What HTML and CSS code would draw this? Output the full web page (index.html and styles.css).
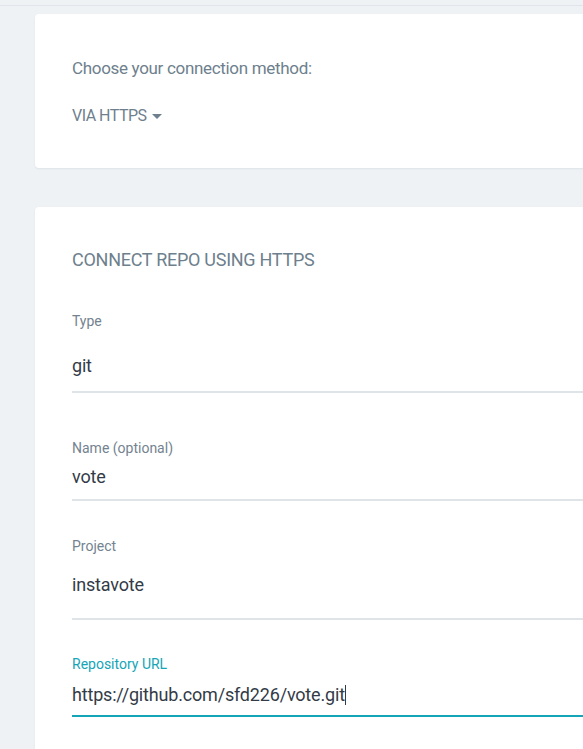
FILE: index.html
```html
<!DOCTYPE html>
<html lang="en">
<head>
<meta charset="utf-8">
<title>Connect repo</title>
<link rel="stylesheet" href="styles.css">
</head>
<body>
<div class="topbar"></div>
<main class="content">
  <section class="card card-method">
    <p class="method-title">Choose your connection method:</p>
    <div class="method-select">VIA HTTPS <span class="caret"></span></div>
  </section>
  <section class="card card-form">
    <h2 class="form-title">CONNECT REPO USING HTTPS</h2>
    <div class="field field-type">
      <div class="field-label">Type</div>
      <div class="field-value">git</div>
    </div>
    <div class="field field-name">
      <div class="field-label">Name (optional)</div>
      <div class="field-value">vote</div>
    </div>
    <div class="field field-project">
      <div class="field-label">Project</div>
      <div class="field-value">instavote</div>
    </div>
    <div class="field field-url field-focused">
      <div class="field-label">Repository URL</div>
      <div class="field-value">https://github.com/sfd226/vote.git<span class="cursor"></span></div>
    </div>
  </section>
</main>
</body>
</html>
```

FILE: styles.css
```css
html, body {
  margin: 0;
  padding: 0;
  background: #eef2f5;
  font-family: Roboto, "Liberation Sans", sans-serif;
  overflow: hidden;
  height: 749px;
}
.topbar {
  height: 5px;
  border-bottom: 1px solid #dfe5ea;
}
.content {
  padding: 8px 0 0 35px;
  display: flex;
  flex-direction: column;
  gap: 39px;
}
.card {
  background: #ffffff;
  border-radius: 4px;
  box-shadow: 0 1px 2px rgba(40, 60, 80, 0.08);
  width: 700px;
  box-sizing: border-box;
  padding-left: 37px;
}
.card-method {
  height: 154px;
  padding-top: 42px;
}
.method-title {
  margin: 0;
  font-size: 17px;
  letter-spacing: -0.32px;
  line-height: 24px;
  color: #6e7f8d;
}
.method-select {
  margin-top: 24px;
  font-size: 16px;
  letter-spacing: -0.5px;
  line-height: 24px;
  color: #6e7f8d;
  display: flex;
  align-items: center;
  gap: 5px;
}
.caret {
  width: 0;
  height: 0;
  border-left: 5px solid transparent;
  border-right: 5px solid transparent;
  border-top: 5px solid #6e7f8d;
  margin-top: 1px;
}
.card-form {
  padding-top: 43px;
  height: 600px;
}
.form-title {
  margin: 0;
  font-weight: 400;
  font-size: 18px;
  letter-spacing: -0.27px;
  line-height: 20px;
  color: #6e7f8d;
}
.field {
  width: 511px;
  border-bottom: 2px solid #dfe4e9;
}
.field-label {
  font-size: 14px;
  line-height: 16px;
  color: #748390;
}
.field-value {
  font-size: 18px;
  letter-spacing: -0.18px;
  line-height: 20px;
  color: #333b47;
}
.field-type { margin-top: 43px; padding-bottom: 15px; }
.field-type .field-value { margin-top: 27px; }
.field-name { margin-top: 47px; padding-bottom: 12px; }
.field-name .field-value { margin-top: 11px; }
.field-project { margin-top: 37px; padding-bottom: 23px; }
.field-project .field-value { margin-top: 21px; }
.field-url { margin-top: 36px; padding-bottom: 10px; }
.field-url .field-value { margin-top: 13px; }
.field-focused { border-bottom-color: #14a5b7; }
.field-focused .field-label { color: #14a5b7; }
.cursor {
  display: inline-block;
  width: 1px;
  height: 20px;
  background: #333b47;
  vertical-align: -4px;
}
```
